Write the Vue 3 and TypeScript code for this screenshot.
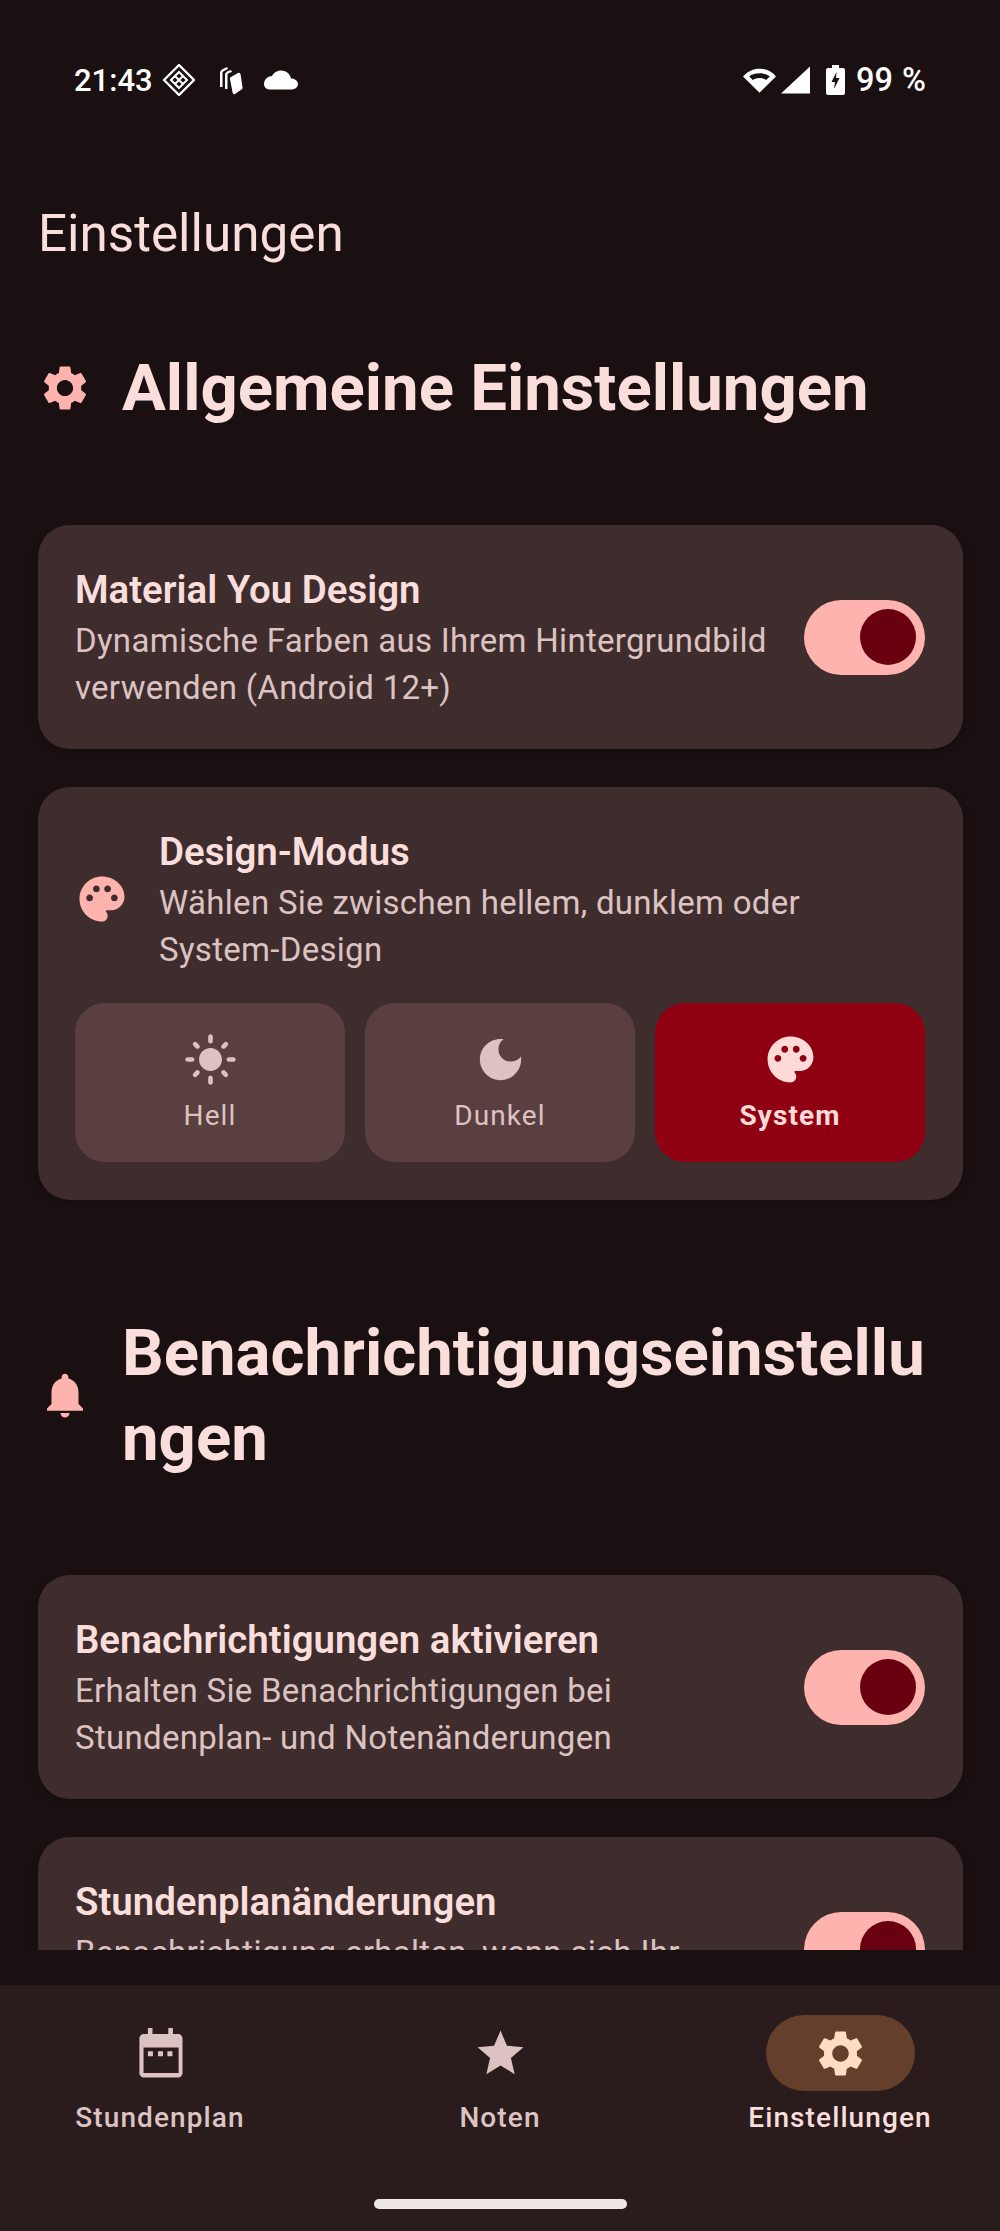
<script setup lang="ts">
const icons = {
  settings:
    'M19.14 12.94c.04-.3.06-.61.06-.94 0-.32-.02-.64-.07-.94l2.03-1.58c.18-.14.23-.41.12-.61l-1.92-3.32c-.12-.22-.37-.29-.59-.22l-2.39.96c-.5-.38-1.03-.7-1.62-.94l-.36-2.54c-.04-.24-.24-.41-.48-.41h-3.84c-.24 0-.43.17-.47.41l-.36 2.54c-.59.24-1.13.57-1.62.94l-2.39-.96c-.22-.08-.47 0-.59.22L2.74 8.87c-.12.21-.08.47.12.61l2.03 1.58c-.05.3-.09.63-.09.94s.02.64.07.94l-2.03 1.58c-.18.14-.23.41-.12.61l1.92 3.32c.12.22.37.29.59.22l2.39-.96c.5.38 1.03.7 1.62.94l.36 2.54c.05.24.24.41.48.41h3.84c.24 0 .44-.17.47-.41l.36-2.54c.59-.24 1.13-.56 1.62-.94l2.39.96c.22.08.47 0 .59-.22l1.92-3.32c.12-.22.07-.47-.12-.61l-2.01-1.58zM12 15.6c-1.98 0-3.6-1.62-3.6-3.6s1.62-3.6 3.6-3.6 3.6 1.62 3.6 3.6-1.62 3.6-3.6 3.6z',
  palette:
    'M12 2C6.49 2 2 6.49 2 12s4.49 10 10 10c1.38 0 2.5-1.12 2.5-2.5 0-.61-.23-1.2-.64-1.67-.08-.1-.13-.21-.13-.33 0-.28.22-.5.5-.5H16c3.31 0 6-2.69 6-6 0-4.96-4.49-9-10-9zm-5.5 11c-.83 0-1.5-.67-1.5-1.5S5.67 10 6.5 10s1.5.67 1.5 1.5S7.33 13 6.5 13zm3-4C8.67 9 8 8.33 8 7.5S8.67 6 9.5 6s1.5.67 1.5 1.5S10.33 9 9.5 9zm5 0c-.83 0-1.5-.67-1.5-1.5S13.67 6 14.5 6s1.5.67 1.5 1.5S15.33 9 14.5 9zm3 4c-.83 0-1.5-.67-1.5-1.5s.67-1.5 1.5-1.5 1.5.67 1.5 1.5-.67 1.5-1.5 1.5z',
  bell: 'M12 22c1.1 0 2-.9 2-2h-4c0 1.1.9 2 2 2zm6-6v-5c0-3.07-1.63-5.64-4.5-6.32V4c0-.83-.67-1.5-1.5-1.5s-1.5.67-1.5 1.5v.68C7.64 5.36 6 7.92 6 11v5l-2 2v1h16v-1l-2-2z',
  sun: 'M12 7c-2.76 0-5 2.24-5 5s2.24 5 5 5 5-2.24 5-5-2.24-5-5-5zM2 13h2c.55 0 1-.45 1-1s-.45-1-1-1H2c-.55 0-1 .45-1 1s.45 1 1 1zm18 0h2c.55 0 1-.45 1-1s-.45-1-1-1h-2c-.55 0-1 .45-1 1s.45 1 1 1zM11 2v2c0 .55.45 1 1 1s1-.45 1-1V2c0-.55-.45-1-1-1s-1 .45-1 1zm0 18v2c0 .55.45 1 1 1s1-.45 1-1v-2c0-.55-.45-1-1-1s-1 .45-1 1zM5.99 4.58a.996.996 0 0 0-1.41 0 .996.996 0 0 0 0 1.41l1.06 1.06c.39.39 1.03.39 1.41 0s.39-1.03 0-1.41L5.99 4.58zm12.37 12.37a.996.996 0 0 0-1.41 0 .996.996 0 0 0 0 1.41l1.06 1.06c.39.39 1.03.39 1.41 0a.996.996 0 0 0 0-1.41l-1.06-1.06zm1.06-10.96a.996.996 0 0 0 0-1.41.996.996 0 0 0-1.41 0l-1.06 1.06c-.39.39-.39 1.03 0 1.41s1.03.39 1.41 0l1.06-1.06zM7.05 18.36a.996.996 0 0 0 0-1.41.996.996 0 0 0-1.41 0l-1.06 1.06c-.39.39-.39 1.03 0 1.41s1.03.39 1.41 0l1.06-1.06z',
  moon: 'M12 3c-4.97 0-9 4.03-9 9s4.03 9 9 9 9-4.03 9-9c0-.46-.04-.92-.1-1.36-.98 1.37-2.58 2.26-4.4 2.26-2.98 0-5.4-2.42-5.4-5.4 0-1.81.89-3.42 2.26-4.4-.44-.06-.9-.1-1.36-.1z',
  star: 'M12 17.27 18.18 21l-1.64-7.03L22 9.24l-7.19-.61L12 2 9.19 8.63 2 9.24l5.46 4.73L5.82 21z',
  calendar:
    'M6.500 .9h2v2.600h6.900V.9h2v2.600h2.200c1.100 0 2 .9 2 2v15c0 1.100-.9 2-2 2H4.800c-1.100 0-2-.9-2-2v-15c0-1.100.9-2 2-2h1.700zM4.600 9.400v11.100h15.300V9.400zM6.500 11h2.200v2.200H6.500zm4.400 0h2.200v2.200h-2.200zm4.100 0h2.200v2.200H15z',
}

interface SettingRow {
  title: string
  desc: string
}

const generalRow: SettingRow = {
  title: 'Material You Design',
  desc: 'Dynamische Farben aus Ihrem Hintergrundbild verwenden (Android 12+)',
}

const notifyRows: SettingRow[] = [
  {
    title: 'Benachrichtigungen aktivieren',
    desc: 'Erhalten Sie Benachrichtigungen bei Stundenplan- und Notenänderungen',
  },
  {
    title: 'Stundenplanänderungen',
    desc: 'Benachrichtigung erhalten, wenn sich Ihr Stundenplan ändert',
  },
]

const modes = [
  { label: 'Hell', icon: icons.sun, active: false },
  { label: 'Dunkel', icon: icons.moon, active: false },
  { label: 'System', icon: icons.palette, active: true },
]

const tabs = [
  { label: 'Stundenplan', icon: icons.calendar, active: false },
  { label: 'Noten', icon: icons.star, active: false },
  { label: 'Einstellungen', icon: icons.settings, active: true },
]
</script>

<template>
  <div class="screen">
    <div class="viewport">
      <header class="status">
        <div class="status-side">
          <span class="clock">21:43</span>
          <svg class="st-diamond" viewBox="0 0 34 34" fill="none" stroke="#fff">
            <path d="M17 2 32 17 17 32 2 17Z" stroke-width="2.4" stroke-linejoin="round" />
            <path d="M17 9 25 17 17 25 9 17Z M13 13 21 21 M21 13 13 21" stroke-width="2" />
          </svg>
          <svg class="st-cards" viewBox="0 0 26 30" fill="#fff">
            <path d="M2 22V8c0-2 1-3 3-4l4-2 1 2-4 2c-1 .5-1.500 1-1.500 2v14z" />
            <path d="M7 24V10c0-2 1-3 3-4l3-1 1 2-3 1c-1 .5-1.500 1-1.500 2v14z" />
            <path d="M13 12l7-4c1-.5 2 0 2.500 1l2 13c.2 1 0 2-1 2.500L17 29c-1 .5-2 0-2.300-1L12 14c-.2-1 .2-1.500 1-2z" />
          </svg>
          <svg class="st-cloud" viewBox="0 0 34 20" fill="#fff">
            <path d="M27 8.500C26 3.500 22 .5 17 .5c-4 0-7.500 2.300-9 5.600C3.500 6.500 0 10 0 14c0 3.300 2.700 5.500 6 5.500h21c3.800 0 7-2.200 7-5.500 0-3-3-5.500-7-5.500z" />
          </svg>
        </div>
        <div class="status-side">
          <svg class="st-wifi" viewBox="0 0 34 26">
            <path d="M17 25 1 9C5.500 4 11 1.500 17 1.500S28.500 4 33 9z" fill="#fff" />
            <path d="M17 6C12.500 6 9 7.300 7 9l3.500 3.500C12 11.200 14.300 10.500 17 10.500s5 .7 6.500 2L27 9c-2-1.700-5.500-3-10-3z" fill="#1b1011" />
          </svg>
          <svg class="st-signal" viewBox="0 0 30 28" fill="#fff"><path d="M30 0v28H0z" /></svg>
          <svg class="st-batt" viewBox="0 0 19 30">
            <path d="M6 0h7v3h4c1 0 2 .8 2 2v23c0 1.200-1 2-2 2H2c-1 0-2-.8-2-2V5c0-1.200 1-2 2-2h4z" fill="#fff" />
            <path d="M10.500 7 5.500 17H9l-1 7 5.500-11H10z" fill="#1b1011" />
          </svg>
          <span class="batt-text">99 %</span>
        </div>
      </header>

      <h1 class="page-title">Einstellungen</h1>

      <section class="section">
        <div class="section-head">
          <svg class="head-icon" viewBox="0 0 24 24"><path :d="icons.settings" /></svg>
          <h2>Allgemeine Einstellungen</h2>
        </div>

        <div class="card row">
          <div class="row-text">
            <div class="row-title">{{ generalRow.title }}</div>
            <div class="row-desc">{{ generalRow.desc }}</div>
          </div>
          <div class="switch"><span class="thumb"></span></div>
        </div>

        <div class="card">
          <div class="mode-head">
            <svg class="head-icon" viewBox="0 0 24 24"><path :d="icons.palette" /></svg>
            <div class="row-text">
              <div class="row-title">Design-Modus</div>
              <div class="row-desc">Wählen Sie zwischen hellem, dunklem oder System-Design</div>
            </div>
          </div>
          <div class="modes">
            <div v-for="m in modes" :key="m.label" class="mode" :class="{ active: m.active }">
              <svg class="mode-icon" viewBox="0 0 24 24"><path :d="m.icon" /></svg>
              <span>{{ m.label }}</span>
            </div>
          </div>
        </div>
      </section>

      <section class="section second">
        <div class="section-head">
          <svg class="head-icon" viewBox="0 0 24 24"><path :d="icons.bell" /></svg>
          <h2>Benachrichtigungseinstellungen</h2>
        </div>

        <div v-for="r in notifyRows" :key="r.title" class="card row">
          <div class="row-text">
            <div class="row-title">{{ r.title }}</div>
            <div class="row-desc">{{ r.desc }}</div>
          </div>
          <div class="switch"><span class="thumb"></span></div>
        </div>
      </section>
    </div>

    <nav class="tabbar">
      <div class="tabs">
        <div v-for="t in tabs" :key="t.label" class="tab" :class="{ active: t.active }">
          <div class="tab-pill">
            <svg viewBox="0 0 24 24"><path :d="t.icon" /></svg>
          </div>
          <span>{{ t.label }}</span>
        </div>
      </div>
      <div class="home-pill"></div>
    </nav>
  </div>
</template>

<style>
html,
body {
  background: #1b1011;
}
</style>

<style scoped>
.screen {
  width: 1000px;
  height: 2231px;
  display: flex;
  flex-direction: column;
  background: #1b1011;
  font-family: Roboto, 'Noto Sans', sans-serif;
  overflow: hidden;
}
.viewport {
  height: 1950px;
  margin-bottom: 35px;
  padding: 0 37px 0 38px;
  box-sizing: border-box;
  overflow: hidden;
  flex: none;
}
.status {
  height: 44px;
  margin: 58px 0 0;
  padding: 0 37px 0 36px;
  display: flex;
  justify-content: space-between;
  align-items: center;
}
.status-side {
  display: flex;
  align-items: center;
  color: #fff;
}
.clock {
  font-size: 31px;
  font-weight: 500;
  margin-right: 9px;
}
.batt-text {
  font-size: 32.5px;
  font-weight: 500;
  margin-left: 11px;
  word-spacing: 1px;
}
.st-diamond {
  width: 34px;
  height: 34px;
  margin-right: 22px;
}
.st-cards {
  width: 26px;
  height: 30px;
  margin-right: 20px;
}
.st-cloud {
  width: 34px;
  height: 20px;
}
.st-wifi {
  width: 35px;
  height: 27px;
  margin-right: 4px;
}
.st-signal {
  width: 29px;
  height: 28px;
  margin-right: 16px;
}
.st-batt {
  width: 19px;
  height: 30px;
}
.page-title {
  margin: 98px 0 0;
  font-size: 51.2px;
  line-height: 68px;
  font-weight: 400;
  color: #f9dedc;
}
.section {
  margin-top: 77px;
}
.section.second {
  margin-top: 110px;
}
.section-head {
  display: flex;
  align-items: center;
  gap: 30px;
  margin-bottom: 95px;
}
.section-head h2 {
  margin: 0;
  padding-right: 6px;
  min-width: 0;
  font-size: 65.3px;
  line-height: 85px;
  font-weight: 700;
  color: #f9dedc;
  word-break: break-all;
}
.head-icon {
  width: 54px;
  height: 54px;
  flex: none;
  fill: #ffb3ae;
}
.card {
  padding: 38px 38px 38px 37px;
  border-radius: 32px;
  background: #3f2d2e;
  margin-bottom: 38px;
  box-shadow: 0 3px 8px rgba(0, 0, 0, 0.25);
}
.row {
  display: flex;
  align-items: center;
  gap: 30px;
}
.row-text {
  flex: 1;
  min-width: 0;
}
.row-title {
  font-size: 38.4px;
  line-height: 54px;
  font-weight: 600;
  color: #f9dedc;
}
.row-desc {
  font-size: 33px;
  line-height: 47px;
  letter-spacing: 0.3px;
  color: #dcc3c2;
}
.switch {
  width: 121px;
  height: 75px;
  flex: none;
  padding-right: 9px;
  box-sizing: border-box;
  border-radius: 38px;
  background: #ffb3ae;
  display: flex;
  align-items: center;
  justify-content: flex-end;
}
.thumb {
  width: 56px;
  height: 56px;
  border-radius: 50%;
  background: #68000f;
}
.mode-head {
  display: flex;
  align-items: center;
  gap: 30px;
  margin-bottom: 30px;
}
.modes {
  display: grid;
  grid-template-columns: repeat(3, 1fr);
  gap: 20px;
}
.mode {
  height: 159px;
  padding-top: 29px;
  box-sizing: border-box;
  border-radius: 30px;
  background: #5a3f40;
  color: #dcc3c2;
  display: flex;
  flex-direction: column;
  align-items: center;
  gap: 10px;
  font-size: 28px;
  line-height: 38px;
  letter-spacing: 1.1px;
}
.mode-icon {
  width: 55px;
  height: 55px;
  fill: #dcc3c2;
}
.mode.active {
  background: #8f0013;
  color: #ffdad7;
  font-weight: 700;
}
.mode.active .mode-icon {
  fill: #ffdad7;
}
.tabbar {
  flex: 1;
  background: #2a1b1c;
  display: flex;
  flex-direction: column;
  align-items: center;
  padding-top: 30px;
}
.tabs {
  width: 100%;
  display: grid;
  grid-template-columns: repeat(3, 320px);
  column-gap: 20px;
}
.tab {
  display: flex;
  flex-direction: column;
  align-items: center;
  gap: 8px;
  color: #dcc3c2;
  font-size: 28px;
  line-height: 38px;
  font-weight: 500;
  letter-spacing: 1.1px;
}
.tab-pill {
  width: 149px;
  height: 76px;
  border-radius: 38px;
  display: flex;
  align-items: center;
  justify-content: center;
}
.tab-pill svg {
  width: 55px;
  height: 55px;
  fill: #dcc3c2;
}
.tab.active {
  color: #f9dedc;
}
.tab.active .tab-pill {
  background: #643f2b;
}
.tab.active .tab-pill svg {
  fill: #ffdcc4;
}
.home-pill {
  width: 253px;
  height: 10px;
  margin-top: 62px;
  border-radius: 5px;
  background: #efe6e6;
}
</style>
